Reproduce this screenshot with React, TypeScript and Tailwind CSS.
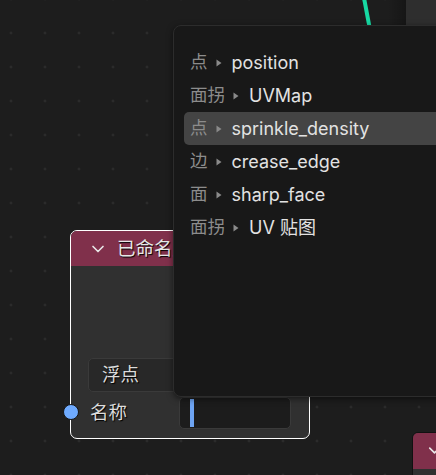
import { ChevronDown } from "lucide-react";

const rows = [
  { cat: "点", name: "position" },
  { cat: "面拐", name: "UVMap" },
  { cat: "点", name: "sprinkle_density", active: true },
  { cat: "边", name: "crease_edge" },
  { cat: "面", name: "sharp_face" },
  { cat: "面拐", name: "UV 贴图" },
];

const font = "font-['Inter','Noto_Sans_CJK_SC',sans-serif]";

function Tri() {
  return (
    <svg width="6" height="8" viewBox="0 0 6 8" className="shrink-0">
      <path d="M0.5 0.5 L5.5 4 L0.5 7.5 Z" fill="#8a8a8a" />
    </svg>
  );
}

export default function App() {
  return (
    <div
      className={`relative w-[436px] h-[475px] overflow-hidden bg-[#1d1d1d] ${font} bg-[radial-gradient(circle,#2b2b2b_1.3px,transparent_1.7px)] bg-[length:34px_34px] bg-[position:-6px_16px]`}
    >
      {/* node peeking in at the top right, with its link */}
      <div className="absolute left-[388px] top-0 w-[18px] h-[26px] bg-gradient-to-r from-transparent to-black/25" />
      <div className="absolute left-[406px] top-0 w-[30px] h-[26px] bg-[#2e2e2e]" />
      <svg className="absolute left-0 top-0" width="436" height="30">
        <line x1="364" y1="-2" x2="369.5" y2="27" stroke="#17d9a3" strokeWidth="4" />
      </svg>

      {/* Named attribute node */}
      <div className="absolute left-[70px] top-[230px] w-[240px] h-[209px] rounded-[7px] border-[1.5px] border-white bg-[#303030] overflow-hidden">
        <div className="h-[35px] bg-[#80304b] flex items-center pl-[17px] gap-[9px] text-[18.5px] text-[#e8e8e8] [text-shadow:1px_1px_1px_#000]">
          <ChevronDown size={20} strokeWidth={2} className="text-[#e8e8e8]" />
          <span>已命名属性</span>
        </div>
        <div className="mt-[92px] ml-[17px] w-[190px] h-[34px] rounded-[5px] bg-[#282828] border border-[#3a3a3a] flex items-center pl-[13px] text-[18.5px] text-[#dcdcdc] [text-shadow:1px_1px_1px_#000]">
          浮点
        </div>
        <div className="mt-[5px] flex items-center">
          <span className="ml-[19px] text-[18.5px] text-[#dcdcdc] [text-shadow:1px_1px_1px_#000]">名称</span>
          <div className="ml-[52px] w-[112px] h-[32px] rounded-[5px] bg-[#1c1c1c] border border-[#3a3a3a] flex items-center pl-[10px]">
            <div className="w-[4px] h-[28px] bg-[#6ea4f2]" />
          </div>
        </div>
      </div>
      {/* input socket */}
      <div className="absolute left-[63px] top-[404px] w-[16px] h-[16px] rounded-full bg-[#6fabff] border-[1.5px] border-[#151515]" />

      {/* node at the bottom right */}
      <div className="absolute left-[412px] top-[432px] w-[60px] h-[60px] rounded-[6px] border border-[#111] bg-[#303030] overflow-hidden">
        <div className="h-[36px] bg-[#80304b] pl-[12px] pt-[8px]">
          <ChevronDown size={19} strokeWidth={2} className="text-[#e8e8e8]" />
        </div>
      </div>

      {/* attribute search menu */}
      <div className="absolute left-[173px] top-[25px] w-[290px] h-[372px] rounded-[8px] bg-[#181818] border border-[#2c2c2c] shadow-[0_2px_6px_rgba(0,0,0,0.5)] pt-[20px] pl-[10px]">
        {rows.map((r, i) => (
          <div
            key={i}
            className={`h-[33px] flex items-center pl-[6px] rounded-l-[5px] ${r.active ? "bg-[#444444]" : ""}`}
          >
            <span className="text-[17.5px] text-[#8c8c8c]">{r.cat}</span>
            <span className="ml-[8px]">
              <Tri />
            </span>
            <span className="ml-[10px] text-[18px] text-[#e2e2e2]">{r.name}</span>
          </div>
        ))}
      </div>
    </div>
  );
}
